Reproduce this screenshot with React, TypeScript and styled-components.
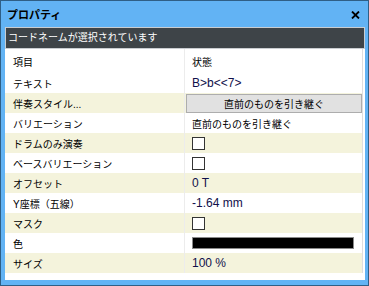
import React from 'react';
import styled, { createGlobalStyle } from 'styled-components';

const GlobalStyle = createGlobalStyle`
  html, body {
    margin: 0;
    padding: 0;
    background: #ffffff;
  }
  * {
    box-sizing: border-box;
  }
`;

const JP = `"Liberation Sans", "Noto Sans CJK JP", sans-serif`;

type Kind = 'text' | 'latin' | 'button' | 'check' | 'color';

interface Row {
  label: string;
  kind: Kind;
  value?: string;
}

const rows: Row[] = [
  { label: 'テキスト', kind: 'latin', value: 'B>b<<7>' },
  { label: '伴奏スタイル...', kind: 'button', value: '直前のものを引き継ぐ' },
  { label: 'バリエーション', kind: 'text', value: '直前のものを引き継ぐ' },
  { label: 'ドラムのみ演奏', kind: 'check' },
  { label: 'ベースバリエーション', kind: 'check' },
  { label: 'オフセット', kind: 'latin', value: '0 T' },
  { label: 'Y座標（五線）', kind: 'latin', value: '-1.64 mm' },
  { label: 'マスク', kind: 'check' },
  { label: '色', kind: 'color' },
  { label: 'サイズ', kind: 'latin', value: '100 %' },
];

const App = () => {
  return (
    <>
      <GlobalStyle />
      <Window>
        <TitleBar>
          <Title>プロパティ</Title>
          <CloseButton aria-label="close">
            <svg width="9" height="8" viewBox="0 0 9 8">
              <path d="M1 0.5 L8 7.5 M8 0.5 L1 7.5" stroke="#000" strokeWidth="1.8" />
            </svg>
          </CloseButton>
        </TitleBar>
        <Selection>コードネームが選択されています</Selection>
        <Panel>
          <Grid>
            <HeaderCell>項目</HeaderCell>
            <HeaderCell $right>状態</HeaderCell>
            {rows.map((r, i) => (
              <React.Fragment key={r.label}>
                <LabelCell $alt={i % 2 === 1}>{r.label}</LabelCell>
                <ValueCell $alt={i % 2 === 1} $latin={r.kind === 'latin'}>
                  {r.kind === 'button' && <InheritButton>{r.value}</InheritButton>}
                  {(r.kind === 'text' || r.kind === 'latin') && r.value}
                  {r.kind === 'check' && <CheckBox />}
                  {r.kind === 'color' && <ColorBar />}
                </ValueCell>
              </React.Fragment>
            ))}
          </Grid>
        </Panel>
      </Window>
    </>
  );
};

export default App;

const Window = styled.div`
  width: 369px;
  height: 286px;
  border: 1px solid #2f5f86;
  background: #62b3f4;
  padding: 0 3px 5px 4px;
  display: flex;
  flex-direction: column;
`;

const TitleBar = styled.div`
  height: 26px;
  display: flex;
  align-items: center;
  justify-content: space-between;
  padding: 0 4px 0 2px;
`;

const Title = styled.div`
  font-family: ${JP};
  font-size: 11px;
  font-weight: 700;
  color: #000;
`;

const CloseButton = styled.div`
  width: 12px;
  height: 12px;
  display: flex;
  align-items: center;
  justify-content: center;
  margin-top: 2px;
`;

const Selection = styled.div`
  height: 22px;
  border: 1px solid #c9cdd1;
  background: #3e4448;
  color: #ffffff;
  font-family: ${JP};
  font-size: 10px;
  line-height: 20px;
  padding-left: 2px;
  white-space: nowrap;
`;

const Panel = styled.div`
  flex: 1;
  background: #ffffff;
  padding-right: 2px;
`;

const Grid = styled.div`
  display: grid;
  grid-template-columns: 179px 1fr;
  grid-template-rows: 24px;
  grid-auto-rows: 20px;
  border-right: 1px solid #dedede;
  font-family: ${JP};
  font-size: 10px;
  color: #000;
`;

const HeaderCell = styled.div<{ $right?: boolean }>`
  display: flex;
  align-items: center;
  padding-left: ${(p) => (p.$right ? '7px' : '8px')};
  padding-top: 1px;
  border-left: ${(p) => (p.$right ? '1px solid #ececec' : 'none')};
`;

const LabelCell = styled.div<{ $alt: boolean }>`
  display: flex;
  align-items: center;
  padding-left: 8px;
  background: ${(p) => (p.$alt ? '#f4f3dc' : '#ffffff')};
  white-space: nowrap;
`;

const ValueCell = styled.div<{ $alt: boolean; $latin: boolean }>`
  display: flex;
  align-items: center;
  padding-left: 7px;
  background: ${(p) => (p.$alt ? '#f4f3dc' : '#ffffff')};
  border-left: 1px solid #ececec;
  font-size: ${(p) => (p.$latin ? '12px' : '10px')};
  color: ${(p) => (p.$latin ? '#10104a' : '#000')};
  white-space: nowrap;
`;

const InheritButton = styled.div`
  margin-left: -6px;
  width: 176px;
  height: 19px;
  border: 1px solid #adadad;
  background: #e1e1e1;
  display: flex;
  align-items: center;
  justify-content: center;
  font-size: 10px;
  color: #000;
`;

const CheckBox = styled.div`
  width: 13px;
  height: 13px;
  border: 1px solid #333333;
  background: #ffffff;
`;

const ColorBar = styled.div`
  width: 162px;
  height: 12px;
  border: 1px solid #8a8a8a;
  background: #000000;
`;
